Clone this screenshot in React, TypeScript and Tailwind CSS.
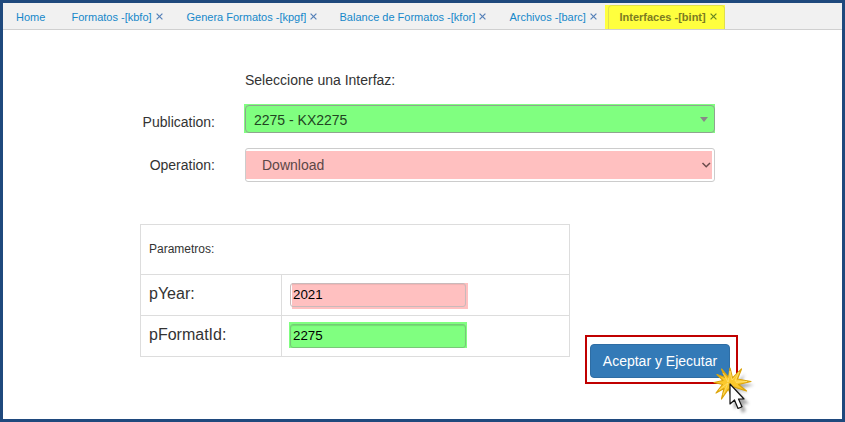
import React from "react";

const tabs = [
  { label: "Formatos -[kbfo]", pos: "ml-[26px] w-[115px]" },
  { label: "Genera Formatos -[kpgf]", pos: "w-[153px]" },
  { label: "Balance de Formatos -[kfor]", pos: "w-[170px]" },
  { label: "Archivos -[barc]", pos: "w-[97px]" },
];

function Cross({ className }: { className: string }) {
  return (
    <svg viewBox="0 0 7 7" className={"mb-[2px] h-[7px] w-[7px] shrink-0 " + className} fill="none" stroke="currentColor" strokeWidth="1.2">
      <path d="M.6.6l5.8 5.8M6.4.6L.6 6.4" />
    </svg>
  );
}

function ClickPointer() {
  return (
    <svg viewBox="0 0 50 50" className="absolute left-[123px] top-[28px] h-[50px] w-[50px]">
      <defs>
        <filter id="soft" x="-50%" y="-50%" width="200%" height="200%">
          <feGaussianBlur stdDeviation="1.6" />
        </filter>
      </defs>
      <g fill="#555" opacity=".5" filter="url(#soft)" transform="translate(4 3)">
        <path d="M20 19v22l5-4 3 8 4-2-3-7h6z" />
        <path d="M22 15l9-9-4 9 13 2-12 3 6 5-12-4z" />
      </g>
      <path
        d="M18.500 12.500L20 3l2.500 10L31.500 4L27.500 14L41 16.500L28.500 19.500L36.500 26L24 22L21 31L18.500 24L11.500 34L14 23.500L6 28L12.500 19.500L4 17.500L13 15.500L7 9.500L15 12.500L11.500 4z"
        fill="#fbc92d" stroke="#dca40a" strokeWidth="1.2" strokeLinejoin="round"
      />
      <path d="M13 8l5 9 2-11 2 9 7-8-4 9 12 .5-11 1M9 25l9-7-5 12" fill="none" stroke="#ffe477" strokeWidth=".7" />
      <path d="M20 19v20l4.500-4 3.500 8.500 4-1.800-3.500-7.700h5.500z" fill="#fff" stroke="#111" strokeWidth="1.2" strokeLinejoin="round" />
    </svg>
  );
}

export default function App() {
  return (
    <div className="h-[422px] w-[845px] overflow-hidden border-[3px] border-[#1f497d] bg-white font-['Liberation_Sans',Arial,sans-serif] text-[14px] text-[#333]">
      <nav className="flex h-[27px] items-end border-b border-[#d0d0d0] bg-[#f1f1f1] text-[11px] leading-[24px] text-[#1688ca]">
        <a className="ml-[13px] w-[29px]">Home</a>
        {tabs.map((t) => (
          <a key={t.label} className={"flex shrink-0 items-center gap-[4px] whitespace-nowrap pl-[0.5px] " + t.pos}>
            {t.label}
            <Cross className="text-[#5580b8]" />
          </a>
        ))}
        <div className="ml-[-1px] flex h-[24px] w-[120px] bg-[#ffff3e] pl-[3px]">
          <a className="flex w-full items-center gap-[4px] whitespace-nowrap rounded-t-[4px] border border-b-0 border-[#e0e04c] pb-px pl-[10.500px] font-bold leading-[22px] text-[#7b7b22]">
            Interfaces -[bint]
            <Cross className="text-[#668522]" />
          </a>
        </div>
      </nav>

      <form className="flex flex-col">
        <div className="ml-[242px] mt-[40px] h-[20px] leading-[20px]">Seleccione una Interfaz:</div>
        <div className="mt-[14px] flex h-[29px]">
          <label className="w-[212px] pt-[8px] text-right leading-[20px]">Publication:</label>
          <div className="ml-[29px] w-[471px] bg-[#80ff80] pl-px pt-px">
            <div className="flex h-[28px] items-center justify-between rounded-[4px] border border-[#8fa58f] pl-[8px] pr-[6px] text-[#224422]">
              <span className="pt-[2px]">2275 - KX2275</span>
              <svg viewBox="0 0 8 5" className="h-[5px] w-[8px]"><path d="M0 0h8L4 5z" fill="#888" /></svg>
            </div>
          </div>
        </div>
        <div className="mt-[15px] flex h-[34px]">
          <label className="w-[212px] pt-[7px] text-right leading-[20px]">Operation:</label>
          <div className="ml-[30px] w-[470px] rounded-[3px] border border-[#ccc] py-[2px] pr-[2px]">
            <div className="flex h-[28px] items-center justify-between bg-[#ffc0c0] pl-[16px] text-[#5d4747]">
              <span>Download</span>
              <svg viewBox="0 0 10 6" className="mr-[1px] h-[6px] w-[10px]" fill="none" stroke="#6b4c4c" strokeWidth="1.5"><path d="M1.500 1l3.700 3.700L9 1" /></svg>
            </div>
          </div>
        </div>

        <div className="flex">
          <div className="ml-[137px] mt-[42px] h-[133px] w-[430px] border border-[#ddd]">
            <div className="flex h-[50px] items-center border-b border-[#ddd] pb-[2px] pl-[8px] text-[12px]">Parametros:</div>
            <div className="flex h-[41px] border-b border-[#ddd]">
              <label className="w-[141px] border-r border-[#ddd] pl-[8px] pt-[7px] text-[16px] leading-[24px]">pYear:</label>
              <div className="ml-[8px] mt-[8px] h-[26px] w-[178px] bg-gradient-to-r from-white from-[2px] to-[#ffc0c0] to-[2px]">
                <div className="h-[24px] w-[176px] rounded-[3px] border border-[#c9babb] pl-[2px] text-[13.333px] leading-[22px] text-black shadow-[inset_0_1px_1px_#0001]">2021</div>
              </div>
            </div>
            <div className="flex h-[40px]">
              <label className="w-[141px] border-r border-[#ddd] pl-[8px] pt-[7px] text-[16px] leading-[24px]">pFormatId:</label>
              <div className="ml-[7px] mt-[6px] h-[26px] w-[178px] bg-[#80ff80] pl-px pt-[2px]">
                <div className="h-[24px] w-[176px] rounded-[3px] border border-[#78c878] pl-[2px] text-[13.333px] leading-[22px] text-black shadow-[inset_0_1px_1px_#0002]">2275</div>
              </div>
            </div>
          </div>
          <div className="relative ml-[15px] mt-[153px] h-[49px] w-[153px] border-2 border-[#c00000] pl-[3px] pt-[7px]">
            <button type="button" className="h-[34px] w-[140px] rounded-[4px] border border-[#2e6da4] bg-[#337ab7] text-white">Aceptar y Ejecutar</button>
            <ClickPointer />
          </div>
        </div>
      </form>
    </div>
  );
}
